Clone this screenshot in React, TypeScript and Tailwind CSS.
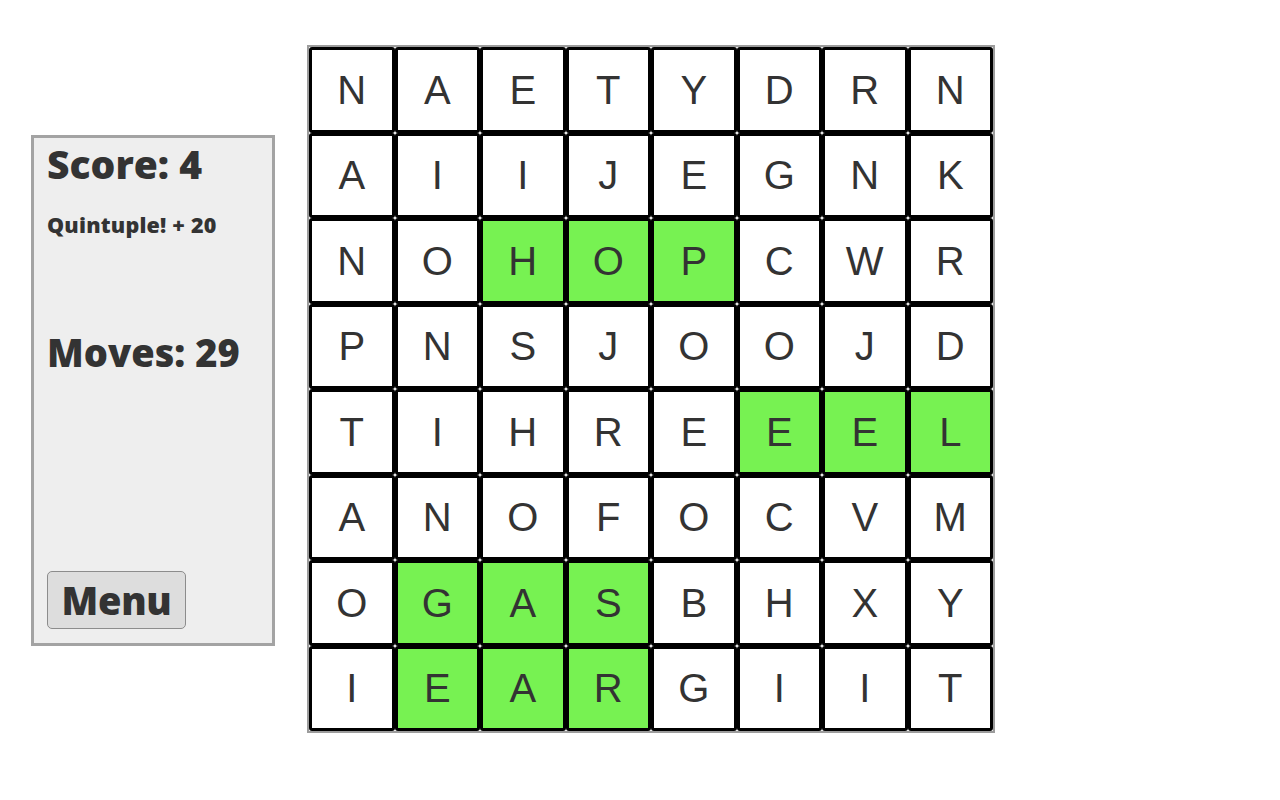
import React from "react";

const rows = [
    "NAETYDRN",
    "AIIJEGNK",
    "NOHOPCWR",
    "PNSJOOJD",
    "TIHREEEL",
    "ANOFOCVM",
    "OGASBHXY",
    "IEARGIIT",
];

// cells that are part of a found word: "row,col"
const found = new Set([
    "2,2", "2,3", "2,4",
    "4,5", "4,6", "4,7",
    "6,1", "6,2", "6,3",
    "7,1", "7,2", "7,3",
]);

const heading = { fontFamily: '"Open Sans", "DejaVu Sans", sans-serif' };

function SidePanel() {
    return (
        <div
            className="flex h-[511px] w-[244px] flex-col border-[3px] border-[#a3a3a3] bg-[#eeeeee] pl-[13px] text-[#333333]"
            style={heading}
        >
            <div className="mt-[2px] text-[39px] font-extrabold leading-[48px]">Score: 4</div>
            <div className="mt-[24px] text-[21.5px] font-extrabold leading-[26px] tracking-[0.2px]">Quintuple! + 20</div>
            <div className="mt-[90px] text-[38px] font-extrabold leading-[48px]">Moves: 29</div>
            <button className="mt-auto mb-[14px] flex h-[58px] w-[139px] items-center justify-center rounded-[5px] border border-[#8c8c8c] bg-[#dddddd] text-[38px] font-extrabold tracking-[-0.3px] text-[#333333]">
                Menu
            </button>
        </div>
    );
}

function Board() {
    return (
        <div className="grid w-[688px] grid-cols-8 border-2 border-[#9c9c9c] bg-white">
            {rows.map((row, r) =>
                row.split("").map((ch, c) => (
                    <div
                        key={`${r}-${c}`}
                        className={`flex h-[85.5px] items-center justify-center rounded-[3px] border-[3px] border-black text-[40px] text-[#333333] ${found.has(`${r},${c}`) ? "bg-[#77f252]" : "bg-white"}`}
                        style={{ fontFamily: '"Liberation Sans", Arial, sans-serif' }}
                    >
                        {ch}
                    </div>
                ))
            )}
        </div>
    );
}

export default function App() {
    return (
        <div className="flex min-h-[800px] w-[1280px] items-start gap-[32px] bg-white pl-[31px] pt-[45px]">
            <div className="mt-[90px]">
                <SidePanel />
            </div>
            <Board />
        </div>
    );
}
